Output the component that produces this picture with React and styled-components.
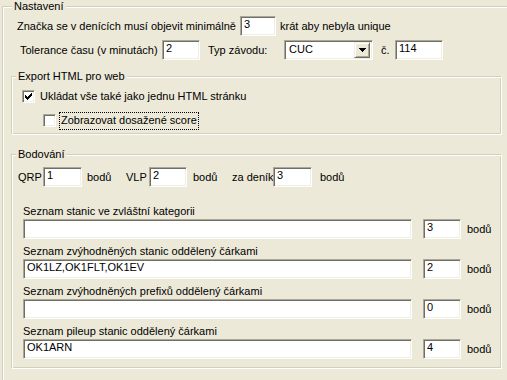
import React from "react";
import styled, { createGlobalStyle } from "styled-components";

const GlobalStyle = createGlobalStyle`
  html, body {
    margin: 0;
    padding: 0;
    background: #ece9d8;
    overflow: hidden;
  }
  body {
    font-family: "Liberation Sans", Arial, sans-serif;
    font-size: 11px;
    color: #000;
  }
`;

const Page = styled.div`
  width: 507px;
  height: 380px;
  overflow: hidden;
  padding-left: 2px;
  box-sizing: border-box;
`;

// etched group box (classic windows look)
const Group = styled.fieldset`
  box-sizing: border-box;
  min-width: 0;
  margin: ${(p) => p.$margin || 0};
  padding: ${(p) => p.$padding || 0};
  width: ${(p) => p.$width};
  height: ${(p) => p.$height || "auto"};
  border: 1px solid;
  border-color: #d0d0bf #fff #fff #d0d0bf;
  box-shadow: inset 1px 1px #fff, inset -1px -1px #d0d0bf;
`;

const Legend = styled.legend`
  margin-left: ${(p) => p.$offset}px;
  padding: 0 2px;
  line-height: 13px;
  background: #ece9d8;
`;

const Row = styled.div`
  display: flex;
  align-items: center;
  height: ${(p) => p.$h || 20}px;
  margin: ${(p) => p.$margin || 0};
  padding-left: ${(p) => p.$indent || 0}px;
  white-space: nowrap;
`;

const Label = styled.span`
  display: inline-block;
  flex: none;
  width: ${(p) => (p.$w ? `${p.$w}px` : "auto")};
  margin-left: ${(p) => p.$ml || 0}px;
  line-height: 13px;
`;

const Edit = styled.input`
  box-sizing: border-box;
  flex: none;
  width: ${(p) => p.$w}px;
  height: 20px;
  margin: 0 0 0 ${(p) => p.$ml || 0}px;
  padding: 0 3px 4px;
  font: inherit;
  color: #000;
  background: #fff;
  border: 1px solid;
  border-color: #aca899 #fff #fff #aca899;
  box-shadow: inset 1px 1px #716f64, inset -1px -1px #f1efe2;
  outline: none;
`;

const Combo = styled.div`
  box-sizing: border-box;
  flex: none;
  display: flex;
  align-items: center;
  width: ${(p) => p.$w}px;
  height: 20px;
  margin-left: ${(p) => p.$ml || 0}px;
  padding: 2px 2px 2px 4px;
  background: #fff;
  border: 1px solid;
  border-color: #aca899 #fff #fff #aca899;
  box-shadow: inset 1px 1px #716f64, inset -1px -1px #f1efe2;
`;

const ComboText = styled.span`
  flex: 1;
  line-height: 13px;
  padding-bottom: 2px;
`;

const DropButton = styled.div`
  box-sizing: border-box;
  width: 16px;
  height: 16px;
  display: flex;
  align-items: center;
  justify-content: center;
  background: #ece9d8;
  border: 1px solid;
  border-color: #f1efe2 #716f64 #716f64 #f1efe2;
  box-shadow: inset 1px 1px #fff, inset -1px -1px #aca899;
`;

const Check = styled.span`
  box-sizing: border-box;
  flex: none;
  width: 13px;
  height: 13px;
  margin-left: ${(p) => p.$ml || 0}px;
  display: flex;
  align-items: center;
  justify-content: center;
  background: #fff;
  border: 1px solid;
  border-color: #aca899 #fff #fff #aca899;
  box-shadow: inset 1px 1px #716f64, inset -1px -1px #f1efe2;
`;

const CheckLabel = styled.span`
  margin-left: ${(p) => p.$ml || 4}px;
  padding: 1px 1px 2px;
  line-height: 13px;
  border: 1px ${(p) => (p.$focus ? "dotted #000" : "solid transparent")};
`;

const ListItem = styled.div`
  margin-top: ${(p) => p.$mt}px;
  padding-left: 11px;
`;

const ListLabel = styled.div`
  line-height: 13px;
  margin-bottom: 1px;
`;

function Tick() {
  const px = [
    [6, 0], [5, 1], [6, 1], [0, 2], [4, 2], [5, 2], [6, 2],
    [0, 3], [1, 3], [3, 3], [4, 3], [5, 3],
    [0, 4], [1, 4], [2, 4], [3, 4], [4, 4],
    [1, 5], [2, 5], [3, 5], [2, 6],
  ];
  return (
    <svg width="7" height="7" viewBox="0 0 7 7" shapeRendering="crispEdges">
      {px.map(([x, y]) => (
        <rect key={`${x}-${y}`} x={x} y={y} width="1" height="1" fill="#000" />
      ))}
    </svg>
  );
}

function Arrow() {
  return (
    <svg width="7" height="4" viewBox="0 0 7 4" shapeRendering="crispEdges">
      <path d="M0 0h7v1H0zM1 1h5v1H1zM2 2h3v1H2zM3 3h1v1H3z" fill="#000" />
    </svg>
  );
}

const lists = [
  { label: "Seznam stanic ve zvláštní kategorii", value: "", points: "3", mt: 18 },
  { label: "Seznam zvýhodněných stanic oddělený čárkami", value: "OK1LZ,OK1FLT,OK1EV", points: "2", mt: 6 },
  { label: "Seznam zvýhodněných prefixů oddělený čárkami", value: "", points: "0", mt: 6 },
  { label: "Seznam pileup stanic oddělený čárkami", value: "OK1ARN", points: "4", mt: 6 },
];

export default function App() {
  return (
    <>
      <GlobalStyle />
      <Page>
        <Group $width="540px" $height="420px">
          <Legend $offset={9}>Nastavení</Legend>

          <Row $margin="3px 0 0" $indent={14}>
            <Label $w={223}>Značka se v denících musí objevit minimálně</Label>
            <Edit $w={36} defaultValue="3" />
            <Label $ml={4}>krát aby nebyla unique</Label>
          </Row>

          <Row $margin="4px 0 0" $indent={17}>
            <Label $w={142}>Tolerance času (v minutách)</Label>
            <Edit $w={38} defaultValue="2" />
            <Label $w={76} $ml={8}>Typ závodu:</Label>
            <Combo $w={89}>
              <ComboText>CUC</ComboText>
              <DropButton>
                <Arrow />
              </DropButton>
            </Combo>
            <Label $w={14} $ml={8}>č.</Label>
            <Edit $w={48} defaultValue="114" />
          </Row>

          <Group $width="491px" $margin="10px 0 0 8px" $padding="0 0 5px">
            <Legend $offset={4}>Export HTML pro web</Legend>
            <Row $h={17} $margin="5px 0 0" $indent={10}>
              <Check>
                <Tick />
              </Check>
              <CheckLabel $ml={3}>Ukládat vše také jako jednu HTML stránku</CheckLabel>
            </Row>
            <Row $h={17} $margin="7px 0 0" $indent={31}>
              <Check />
              <CheckLabel $ml={3} $focus>
                Zobrazovat dosažené score
              </CheckLabel>
            </Row>
          </Group>

          <Group $width="491px" $margin="13px 0 0 8px" $padding="0 0 9px">
            <Legend $offset={4}>Bodování</Legend>
            <Row $margin="6px 0 0" $indent={6}>
              <Label $w={25}>QRP</Label>
              <Edit $w={39} defaultValue="1" />
              <Label $w={39} $ml={5}>bodů</Label>
              <Label $w={23}>VLP</Label>
              <Edit $w={38} defaultValue="2" />
              <Label $w={39} $ml={6}>bodů</Label>
              <Label $w={41}>za deník</Label>
              <Edit $w={39} defaultValue="3" />
              <Label $ml={8}>bodů</Label>
            </Row>

            {lists.map((item) => (
              <ListItem key={item.label} $mt={item.mt}>
                <ListLabel>{item.label}</ListLabel>
                <Row>
                  <Edit $w={389} defaultValue={item.value} />
                  <Edit $w={38} $ml={11} defaultValue={item.points} />
                  <Label $ml={6}>bodů</Label>
                </Row>
              </ListItem>
            ))}
          </Group>
        </Group>
      </Page>
    </>
  );
}
